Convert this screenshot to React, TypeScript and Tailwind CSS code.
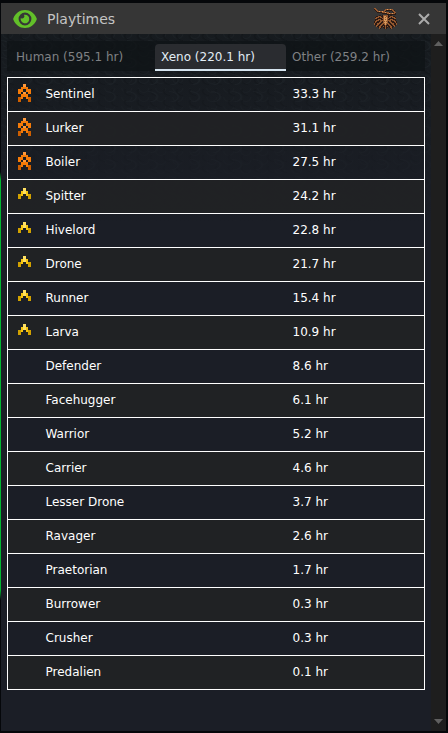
interface Playtime {
  job: string;
  hours: string;
  rank: 0 | 1 | 2;
}

const TABS = [
  { label: "Human (595.1 hr)", active: false },
  { label: "Xeno (220.1 hr)", active: true },
  { label: "Other (259.2 hr)", active: false },
];

const PLAYTIMES: Playtime[] = [
  { job: "Sentinel", hours: "33.3", rank: 2 },
  { job: "Lurker", hours: "31.1", rank: 2 },
  { job: "Boiler", hours: "27.5", rank: 2 },
  { job: "Spitter", hours: "24.2", rank: 1 },
  { job: "Hivelord", hours: "22.8", rank: 1 },
  { job: "Drone", hours: "21.7", rank: 1 },
  { job: "Runner", hours: "15.4", rank: 1 },
  { job: "Larva", hours: "10.9", rank: 1 },
  { job: "Defender", hours: "8.6", rank: 0 },
  { job: "Facehugger", hours: "6.1", rank: 0 },
  { job: "Warrior", hours: "5.2", rank: 0 },
  { job: "Carrier", hours: "4.6", rank: 0 },
  { job: "Lesser Drone", hours: "3.7", rank: 0 },
  { job: "Ravager", hours: "2.6", rank: 0 },
  { job: "Praetorian", hours: "1.7", rank: 0 },
  { job: "Burrower", hours: "0.3", rank: 0 },
  { job: "Crusher", hours: "0.3", rank: 0 },
  { job: "Predalien", hours: "0.1", rank: 0 },
];

// Each character is one sprite pixel, "." is transparent
function Sprite({
  rows,
  colors,
  className,
}: {
  rows: string[];
  colors: Record<string, string>;
  className: string;
}) {
  return (
    <svg
      viewBox={`0 0 ${rows[0].length} ${rows.length}`}
      className={className}
      preserveAspectRatio="none"
      shapeRendering="crispEdges"
      aria-hidden="true"
    >
      {rows.flatMap((row, y) =>
        [...row].map((c, x) =>
          colors[c] ? (
            <rect key={`${x}-${y}`} x={x} y={y} width="1" height="1" fill={colors[c]} />
          ) : null,
        ),
      )}
    </svg>
  );
}

const GOLD_RANK = ["..a..", ".bab.", "cb.bc", "c...c"];
const ORANGE_RANK = [
  "..a..",
  ".bbb.",
  "bb.bb",
  "b.a.b",
  ".bbb.",
  "cb.bc",
  "c...c",
];

const FACEHUGGER = [
  "mm.....................",
  "dmm........mmlmmlmm....",
  ".dmm......mmddddddmmd..",
  "..dmmlmmlmmd......dmm..",
  "...dddddmmmlmmmd...dmm.",
  "........dddddmmlmmlmmd.",
  ".............ddddddddd.",
  ".....dd.dmmmmmd.dd.....",
  "..ddmmmddmllmmddmmmdd..",
  ".dmmmdmmdmlmlmdmmdmmmd.",
  ".mmdddddmmlllmmdddddmm.",
  ".dddmmmddmlmlmddmmmddd.",
  ".dmmmdmmmmlllmmmmdmmmd.",
  "dmmdddmmdmmlmmdmmdddmmd",
  "dmdddmmddmlllmddmmdddmd",
  "mddmmmddmmmlmmmddmmmddm",
  "mddmmddmmdmlmdmmddmmddm",
  ".dmmddmmdddmdddmmddmmd.",
  "..mddmmddmdmdmddmmddm..",
  "....dmmd.ddmdd.dmmd....",
  ".....md...dmd...dm.....",
];

function RankIcon({ rank }: { rank: Playtime["rank"] }) {
  if (rank === 2) {
    return (
      <Sprite
        rows={ORANGE_RANK}
        colors={{ a: "#ff993b", b: "#f57b08", c: "#ce5f00" }}
        className="mb-[2px] h-[18px] w-[13px]"
      />
    );
  }
  if (rank === 1) {
    return (
      <Sprite
        rows={GOLD_RANK}
        colors={{ a: "#ffe061", b: "#f8c60e", c: "#d1a100" }}
        className="mb-1 h-[11px] w-[13px]"
      />
    );
  }
  return null;
}

function EyeIcon() {
  return (
    <svg viewBox="0 0 24 18" className="h-[18px] w-6 shrink-0" aria-hidden="true">
      <path
        fill="#62bf29"
        fillRule="evenodd"
        d="M12 0C6.500 0 2.500 3.500.5 8a2 2 0 0 0 0 2c2 4.500 6 8 11.500 8s9.500-3.500 11.500-8a2 2 0 0 0 0-2C21.500 3.500 17.500 0 12 0Zm0 2.600a6.400 6.400 0 1 1 0 12.800 6.400 6.400 0 0 1 0-12.800Z"
      />
      <path
        fill="#62bf29"
        d="M12 4.700a4.300 4.300 0 1 1-4.200 3.200 2.200 2.200 0 0 0 3.100-3.100q.5-.1 1.100-.1Z"
      />
    </svg>
  );
}

export default function App() {
  return (
    <div className="min-h-screen bg-[#05070a] bg-[linear-gradient(90deg,transparent_50%,#05070a_50%),linear-gradient(#05070a_0_172px,#00b830_180px_590px,#05070a_600px)] pt-[3px] pr-0.5 pb-0.5 pl-px font-['DejaVu_Sans',sans-serif] text-xs text-white">
      <div className="flex min-h-[728px] flex-col bg-[#1b1e26]">
        <header className="flex h-[31px] items-center bg-[#363636] pr-[15px] pl-3">
          <EyeIcon />
          <h1 className="ml-[10px] flex-1 text-sm text-[#c4c4c4]">Playtimes</h1>
          <Sprite
            rows={FACEHUGGER}
            colors={{ d: "#2c1a14", m: "#94582f", l: "#d89a5c" }}
            className="h-[21px] w-[23px]"
          />
          <button type="button" aria-label="Close" className="ml-5 text-[#ababab]">
            <svg viewBox="0 0 14 14" className="h-[14px] w-[14px]" aria-hidden="true">
              <path d="M2 2l10 10M12 2 2 12" stroke="currentColor" strokeWidth="2" />
            </svg>
          </button>
        </header>
        <div className="flex flex-1">
          <main className="flex-1 bg-[linear-gradient(#161a1e88,#1b1e26_190px),radial-gradient(ellipse_at_0%_70%,transparent_8px,#252d31_9px,transparent_11px),radial-gradient(ellipse_at_100%_20%,transparent_5px,#0d1114_6px,transparent_8px),radial-gradient(ellipse_at_40%_0%,transparent_4px,#20272b_5px,transparent_6px),linear-gradient(#161b1f,#161b1f)] bg-[size:auto,21px_17px,13px_11px,17px_9px,auto] px-[6px] pt-[7px] pb-6">
            <nav className="mb-[6px] flex h-[30px] items-end bg-[#0e1216]/70 pl-[3px]">
              {TABS.map((tab) => (
                <button
                  key={tab.label}
                  type="button"
                  className={
                    tab.active
                      ? "h-[27px] w-[131px] rounded-t-sm border-b-2 border-[#d5e4ef] bg-[#2a2c30] pl-[6px] text-left text-[#e2edf5]"
                      : "h-[27px] w-[145px] border-b-2 border-transparent pl-[6px] text-left text-[#7f8184] last:w-auto"
                  }
                >
                  {tab.label}
                </button>
              ))}
            </nav>
            <table className="w-full border-collapse">
              <tbody>
                {PLAYTIMES.map((p) => (
                  <tr
                    key={p.job}
                    className="h-[34px] border border-white even:bg-[#212225]/90"
                  >
                    <td className="w-[38px] pb-[2px] pl-[10px]">
                      <RankIcon rank={p.rank} />
                    </td>
                    <td className="pb-[2px]">{p.job}</td>
                    <td className="w-[132px] pb-[2px]">{p.hours} hr</td>
                  </tr>
                ))}
              </tbody>
            </table>
          </main>
          <div className="flex w-[15px] flex-col items-center justify-between bg-[#1e1e1e] pt-[7px] pb-[7px]">
            <svg viewBox="0 0 9 5" className="h-[5px] w-[9px]" aria-hidden="true">
              <path fill="#606060" d="M0 5 4.500 0 9 5Z" />
            </svg>
            <svg viewBox="0 0 9 5" className="h-[5px] w-[9px]" aria-hidden="true">
              <path fill="#606060" d="M0 0h9L4.500 5Z" />
            </svg>
          </div>
        </div>
      </div>
    </div>
  );
}
